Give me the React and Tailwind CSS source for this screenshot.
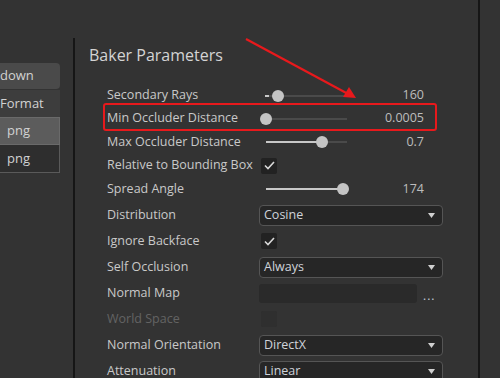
import React from "react";

const font = { fontFamily: '"Open Sans", "Noto Sans", Arial, sans-serif' };

function Slider({ pct, dash }) {
  // track runs from thumb-center min to max
  return (
    <div className="relative w-[90px] h-[12px] ml-[1px]">
      <div className="absolute left-[6px] right-[3px] top-[5px] h-[2px] bg-[#4a4a4a]" />
      {dash ? (
        <div className="absolute left-[5px] w-[4px] top-[5px] h-[2px] bg-[#c8c8c8]" />
      ) : (
        <div
          className="absolute left-[6px] top-[5px] h-[2px] bg-[#c8c8c8]"
          style={{ width: `${pct * 0.8}px` }}
        />
      )}
      <div
        className="absolute top-0 w-[12px] h-[12px] rounded-full bg-[#c4c4c4]"
        style={{ left: `${pct * 0.8}px` }}
      />
    </div>
  );
}

function SliderRow({ label, pct, value, dash, tall }) {
  return (
    <div className={"flex items-center " + (tall ? "h-[24px]" : "h-[23px]")}>
      <div className="w-[152px] text-[12.5px] text-[#c9c9c9]">{label}</div>
      <Slider pct={pct} dash={dash} />
      <div className="w-[74px] text-right text-[12.5px] text-[#bdbdbd]">{value}</div>
    </div>
  );
}

function Check({ on, disabled }) {
  return (
    <div
      className={
        "ml-[2px] w-[16px] h-[16px] rounded-[2px] flex items-center justify-center " +
        (disabled ? "bg-[#2f2f2f]" : "bg-[#222222]")
      }
    >
      {on && (
        <svg width="11" height="9" viewBox="0 0 11 9" fill="none">
          <path d="M1 4.5 L4 7.5 L10 1" stroke="#d8d8d8" strokeWidth="1.6" />
        </svg>
      )}
    </div>
  );
}

function Select({ text }) {
  return (
    <div className="w-[184px] h-[21px] flex items-center justify-between rounded-[4px] border border-[#555555] bg-[#262626] pl-[4px] pr-[7px] text-[12.5px] text-[#cfd3da]">
      <span>{text}</span>
      <svg width="7" height="5" viewBox="0 0 7 5">
        <path d="M0 0 H7 L3.5 5 Z" fill="#d0d0d0" />
      </svg>
    </div>
  );
}

function Row({ label, dim, children }) {
  return (
    <div className="flex items-center h-[26px]">
      <div className={"w-[152px] text-[12.5px] " + (dim ? "text-[#636363]" : "text-[#c9c9c9]")}>
        {label}
      </div>
      {children}
    </div>
  );
}

export default function App() {
  return (
    <div className="relative w-[500px] h-[378px] overflow-hidden bg-[#333333] flex" style={font}>
      {/* left panel */}
      <div className="w-[73px] pt-[63px] flex flex-col text-[13px] text-[#d2d2d2]">
        <div className="w-[60px] h-[26px] rounded-r-[4px] bg-[#4a4a4a] flex items-center">down</div>
        <div className="w-[60px] h-[27px] mt-[1px] bg-[#3d3d3d] flex items-center">Format</div>
        <div className="w-[60px] h-[28px] bg-[#5c5c5c] border border-l-0 border-[#6a6a6a] flex items-center pl-[7px]">png</div>
        <div className="w-[60px] h-[28px] bg-[#2e2e2e] border border-t-0 border-l-0 border-[#5a5a5a] flex items-center pl-[7px]">png</div>
      </div>
      <div className="mt-[38px] w-[2px] bg-[#161616]" />

      {/* main panel */}
      <div className="w-[403px] pl-[14px]">
        <div className="h-[84px] pt-[43px] text-[16px] leading-[24px] text-[#d4d4d4]">Baker Parameters</div>
        <div className="pl-[18px]">
          <SliderRow label="Secondary Rays" pct={15} dash value="160" />
          <SliderRow label="Min Occluder Distance" pct={0} value="0.0005" />
          <SliderRow label="Max Occluder Distance" pct={70} value="0.7" tall />
          <div className="flex items-center h-[23px]">
            <div className="w-[152px] text-[12.5px] text-[#c9c9c9]">Relative to Bounding Box</div>
            <Check on />
          </div>
          <SliderRow label="Spread Angle" pct={96} value="174" tall />
          <div className="h-[1px]" />
          <Row label="Distribution">
            <Select text="Cosine" />
          </Row>
          <Row label="Ignore Backface">
            <Check on />
          </Row>
          <Row label="Self Occlusion">
            <Select text="Always" />
          </Row>
          <Row label="Normal Map">
            <div className="w-[158px] h-[19px] rounded-[3px] bg-[#2a2a2a]" />
            <div className="ml-[6px] text-[12px] text-[#c0c8d8] tracking-[1px] leading-none pt-[6px]">...</div>
          </Row>
          <Row label="World Space" dim>
            <Check disabled />
          </Row>
          <Row label="Normal Orientation">
            <Select text="DirectX" />
          </Row>
          <Row label="Attenuation">
            <Select text="Linear" />
          </Row>
        </div>
      </div>
      <div className="w-[2px] bg-[#161616]" />
      <div className="flex-1" />

      {/* annotation overlay */}
      <div className="absolute left-[103px] top-[103px] w-[334px] h-[28px] rounded-[3px] border-2 border-[#e8191c]" />
      <svg className="absolute left-0 top-0" width="500" height="378" viewBox="0 0 500 378">
        <line x1="246" y1="39" x2="350" y2="95" stroke="#e8191c" strokeWidth="2.2" />
        <path d="M356 98 L343 97 L349 87 Z" fill="#e8191c" />
      </svg>
    </div>
  );
}
